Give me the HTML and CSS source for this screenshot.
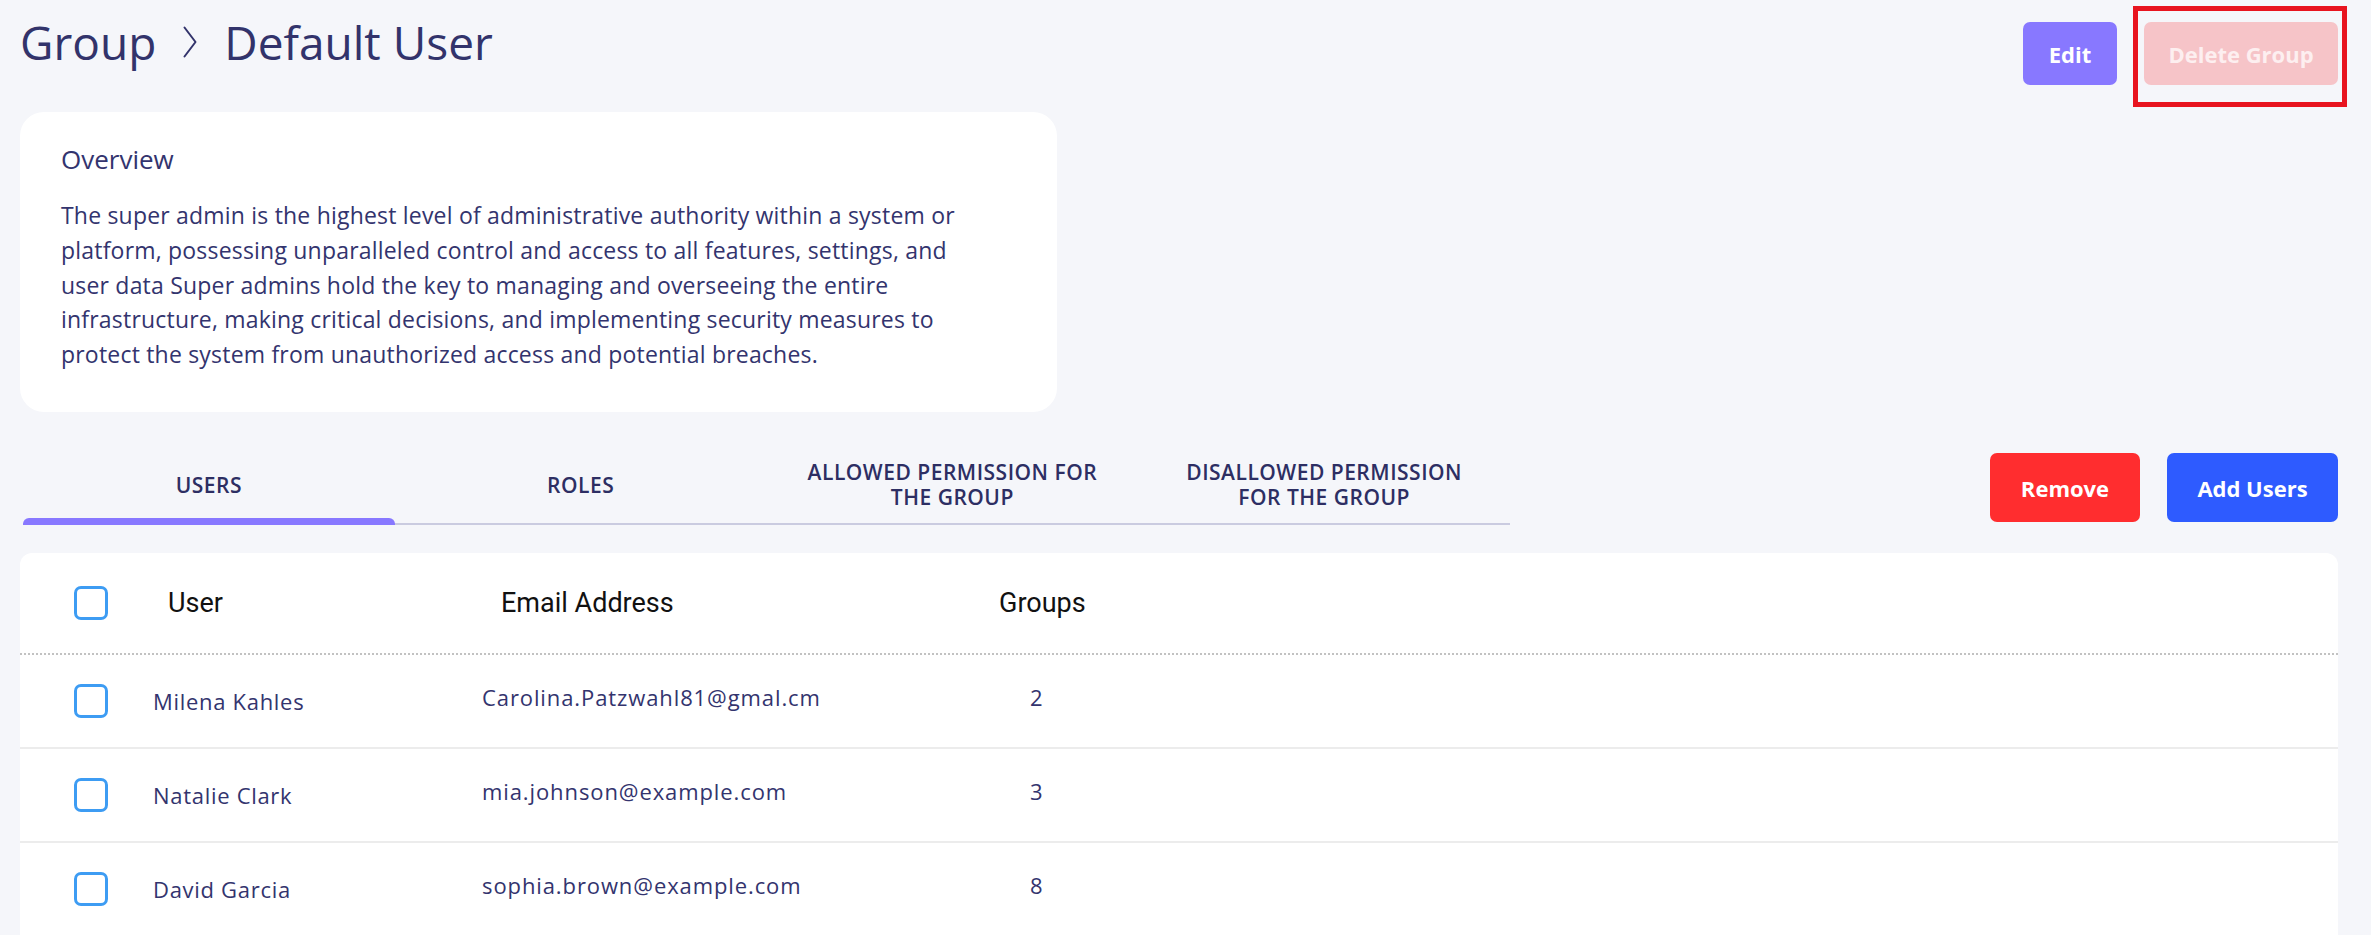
FILE: index.html
```html
<!DOCTYPE html>
<html lang="en">
<head>
<meta charset="utf-8">
<title>Group - Default User</title>
<link rel="stylesheet" href="styles.css">
</head>
<body>
<div class="page">
  <header class="topbar">
    <h1 class="crumbs">
      <span>Group</span>
      <svg class="chev" viewBox="0 0 14 32" width="14" height="32" aria-hidden="true"><path d="M1.5 1.5 L12.5 16 L1.5 30.5" fill="none" stroke="currentColor" stroke-width="2" stroke-linecap="round" stroke-linejoin="round"/></svg>
      <span>Default User</span>
    </h1>
    <div class="actions">
      <button class="btn btn-edit">Edit</button>
      <span class="highlight"><button class="btn btn-delete">Delete Group</button></span>
    </div>
  </header>

  <section class="overview">
    <h2>Overview</h2>
    <p>The super admin is the highest level of administrative authority within a system or platform, possessing unparalleled control and access to all features, settings, and user data Super admins hold the key to managing and overseeing the entire infrastructure, making critical decisions, and implementing security measures to protect the system from unauthorized access and potential breaches.</p>
  </section>

  <div class="toolbar">
    <nav class="tabs">
      <div class="tab active"><span class="tab-label">USERS</span></div>
      <div class="tab"><span class="tab-label">ROLES</span></div>
      <div class="tab"><span class="tab-label">ALLOWED PERMISSION FOR THE GROUP</span></div>
      <div class="tab"><span class="tab-label">DISALLOWED PERMISSION FOR THE GROUP</span></div>
    </nav>
    <div class="toolbar-actions">
      <button class="btn btn-remove">Remove</button>
      <button class="btn btn-add">Add Users</button>
    </div>
  </div>

  <section class="table">
    <div class="row head">
      <span class="check"></span>
      <span class="th th-user">User</span>
      <span class="th th-email">Email Address</span>
      <span class="th th-groups">Groups</span>
    </div>
    <div class="row">
      <span class="check"></span>
      <span class="td name">Milena Kahles</span>
      <span class="td email">Carolina.Patzwahl81@gmal.cm</span>
      <span class="td count">2</span>
    </div>
    <div class="row">
      <span class="check"></span>
      <span class="td name">Natalie Clark</span>
      <span class="td email">mia.johnson@example.com</span>
      <span class="td count">3</span>
    </div>
    <div class="row">
      <span class="check"></span>
      <span class="td name">David Garcia</span>
      <span class="td email">sophia.brown@example.com</span>
      <span class="td count">8</span>
    </div>
  </section>
</div>
</body>
</html>
```

FILE: styles.css
```css
html, body {
  margin: 0;
  padding: 0;
  overflow: hidden;
  background: #f5f6fa;
}

body {
  font-family: "Open Sans", "Noto Sans", sans-serif;
  color: #33346e;
}

.page {
  padding: 0 33px 0 20px;
}

/* ---------- top bar ---------- */
.topbar {
  display: flex;
  justify-content: space-between;
  align-items: flex-start;
  padding-top: 11px;
}

.crumbs {
  margin: 0;
  display: flex;
  align-items: center;
  gap: 27px;
  font-size: 46px;
  font-weight: 400;
  line-height: 1.362;
  color: #32336b;
}

.chev {
  display: block;
  color: #32336b;
}

.actions {
  display: flex;
  gap: 27px;
  margin-top: 11px;
}

.btn {
  border: 0;
  border-radius: 7px;
  font-family: "Open Sans", "Noto Sans", sans-serif;
  font-weight: 700;
  font-size: 22px;
  color: #ffffff;
  padding: 0;
  cursor: pointer;
}

.btn-edit {
  width: 94px;
  height: 63px;
  background: #8878ff;
}

.btn-delete {
  width: 194px;
  height: 63px;
  background: #f6c4c8;
  color: #fdeff0;
}

.highlight {
  position: relative;
  display: flex;
}

.highlight::after {
  content: "";
  position: absolute;
  left: -11px;
  right: -9px;
  top: -16px;
  bottom: -22px;
  border: 5px solid #e8141f;
  pointer-events: none;
}

/* ---------- overview ---------- */
.overview {
  margin-top: 27px;
  width: 1037px;
  box-sizing: border-box;
  padding: 30px 41px 41px;
  background: #ffffff;
  border-radius: 24px;
}

.overview h2 {
  margin: 0 0 21px;
  font-size: 26px;
  font-weight: 400;
  line-height: 1.362;
  color: #33346e;
}

.overview p {
  margin: 0;
  max-width: 915px;
  font-size: 23px;
  line-height: 34.6px;
  letter-spacing: 0.2px;
  color: #33346e;
}

/* ---------- tabs + actions ---------- */
.toolbar {
  margin-top: 41px;
  display: flex;
  justify-content: space-between;
  align-items: flex-start;
}

.tabs {
  margin-left: 3px;
  width: 1487px;
  height: 72px;
  box-sizing: border-box;
  display: flex;
  border-bottom: 2px solid #cacbe0;
}

.tab {
  flex: 1;
  position: relative;
  display: flex;
  align-items: center;
  justify-content: center;
  padding-bottom: 6px;
  text-align: center;
}

.tab-label {
  max-width: 310px;
  font-size: 21px;
  font-weight: 600;
  line-height: 25px;
  letter-spacing: 0.5px;
  color: #2d2e63;
}

.tab.active::after {
  content: "";
  position: absolute;
  left: 0;
  right: 0;
  bottom: -2px;
  height: 7px;
  background: #8878ff;
  border-radius: 6px 6px 0 0;
}

.toolbar-actions {
  display: flex;
  gap: 27px;
}

.btn-remove {
  width: 150px;
  height: 69px;
  background: #ff2d2f;
}

.btn-add {
  width: 171px;
  height: 69px;
  background: #2e5bff;
}

/* ---------- table ---------- */
.table {
  margin-top: 28px;
  background: #ffffff;
  border-radius: 12px 12px 0 0;
}

.row {
  display: grid;
  grid-template-columns: 79px 329px 517px 1fr;
  align-items: center;
  padding-left: 54px;
  height: 94px;
  box-sizing: border-box;
  border-bottom: 2px solid #ececec;
}

.row.head {
  height: 102px;
  border-bottom: 2px dotted #c2c2c2;
}

.check {
  width: 34px;
  height: 34px;
  box-sizing: border-box;
  border: 3px solid #3d9cf3;
  border-radius: 7px;
}

.th {
  font-family: Roboto, "Liberation Sans", sans-serif;
  font-size: 27px;
  font-weight: 400;
  color: #111111;
}

.th-user { padding-left: 15px; }
.th-email { padding-left: 19px; }

.td {
  font-size: 22px;
  color: #33346e;
}

.name {
  letter-spacing: 0.7px;
}

.email {
  letter-spacing: 0.9px;
  padding-bottom: 8px;
}

.count {
  padding-left: 31px;
  padding-bottom: 8px;
}
```
